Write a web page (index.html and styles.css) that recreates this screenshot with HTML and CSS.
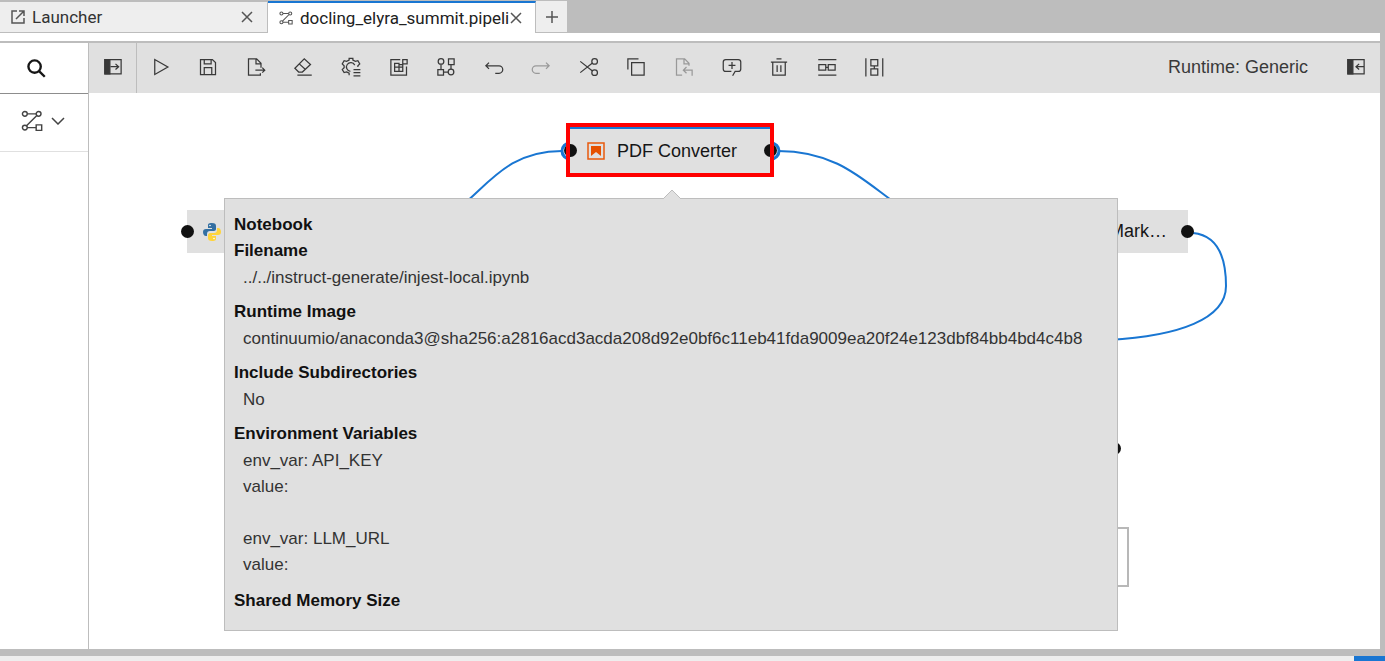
FILE: index.html
```html
<!DOCTYPE html>
<html lang="en">
<head>
<meta charset="utf-8">
<title>docling_elyra_summit.pipeline</title>
<link rel="stylesheet" href="styles.css">
</head>
<body>
<svg class="sprite" aria-hidden="true">
  <symbol id="pipeline" viewBox="0 0 20 20"><circle cx="3.500" cy="3.500" r="2.200"/><circle cx="16" cy="3.500" r="2.200"/><circle cx="3.500" cy="16" r="2.200"/><path d="M5.700 3.500h8.100M14.400 5 5 14.400M5.700 16h8.100M13.800 13.500h5v5h-5z"/></symbol>
  <symbol id="close" viewBox="0 0 12 12"><path d="m1 1 10 10M11 1 1 11"/></symbol>
</svg>
<div class="app">
  <header class="tabs">
    <div class="tab">
      <svg class="tab-icon launch" viewBox="0 0 14 14"><path d="M6 1H1v12h12V8M8 1h5v5M13 1 5 9"/></svg>
      <span class="tab-name">Launcher</span>
      <button class="tab-close" aria-label="Close Launcher"><svg><use href="#close"/></svg></button>
    </div>
    <div class="tab active">
      <svg class="tab-icon"><use href="#pipeline"/></svg>
      <span class="tab-name">docling_elyra_summit.pipeli</span>
      <button class="tab-close" aria-label="Close pipeline"><svg><use href="#close"/></svg></button>
    </div>
    <button class="tab-add" aria-label="New tab"><svg viewBox="0 0 12 12"><path d="M6 0v12M0 6h12"/></svg></button>
  </header>
  <main class="editor">
    <aside class="palette">
      <button class="search" aria-label="Search nodes"><svg viewBox="0 0 20 20"><circle cx="8" cy="8" r="6.500"/><path d="m12.700 12.700 6 6"/></svg></button>
      <button class="category" aria-label="Pipeline nodes"><svg class="cat-icon"><use href="#pipeline"/></svg><svg class="chevron" viewBox="0 0 14 8"><path d="m1 1 6 6 6-6"/></svg></button>
    </aside>
    <section class="work">
      <div class="toolbar">
        <button class="panel-left" aria-label="Open palette"><svg viewBox="0 0 32 32"><path d="M3 4h26v23H3zM12 15.500h13M20 11l5 4.500-5 4.500"/><path class="fill" d="M3 4h8v23H3z"/></svg></button>
        <div class="tools">
          <button aria-label="Run"><svg viewBox="0 0 32 32"><path d="M6 4v24l21-12z"/></svg></button>
          <button aria-label="Save"><svg viewBox="0 0 32 32"><path d="M4 4h19l5 5v19H4zM10 4v7h11V4M10 28V17h12v11"/></svg></button>
          <button aria-label="Export"><svg viewBox="0 0 32 32"><path d="M23 26v3H4V3h13l7 7v7M16 3v8h8M15 21h15M26 17l4 4-4 4"/></svg></button>
          <button aria-label="Clear"><svg viewBox="0 0 32 32"><path d="M7 29h23M9 24 3 18 18 3l10 9-13 12zM10 11l10 9"/></svg></button>
          <button aria-label="Properties"><svg viewBox="0 0 32 32"><path d="M13 29v-3l-4-2-4 1-3-5 3-3v-3L2 11l3-5 4 1 4-2V2h6v3l4 2 4-1 3 5-3 3v2M22 13a7 7 0 1 0-7 10M20 20h11M20 25h11M20 30h11"/></svg></button>
          <button aria-label="Runtimes"><svg viewBox="0 0 32 32"><path d="M18 4H3v25h25V15M22 4h7v7h-7zM9 10h7v13H9zM9 16h13v7H9M16 16v7M16 12h6v4"/></svg></button>
          <button aria-label="Components"><svg viewBox="0 0 32 32"><circle cx="8" cy="7" r="4.500"/><path d="M20 3h9v9h-9zM3 20h9v9H3zM8 12v8M24 12v8M12 24h8"/><circle cx="24" cy="24" r="4.500"/></svg></button>
          <button aria-label="Undo"><svg viewBox="0 0 32 32"><path d="M8 9 3 14l5 5M3 14h21a6 6 0 0 1 0 12h-6"/></svg></button>
          <button disabled aria-label="Redo"><svg viewBox="0 0 32 32"><path d="m24 9 5 5-5 5M29 14H8a6 6 0 0 0 0 12h6"/></svg></button>
          <button aria-label="Cut"><svg viewBox="0 0 32 32"><circle cx="25" cy="7" r="4.500"/><circle cx="25" cy="25" r="4.500"/><path d="m2 7 19 15M2 25 21 10"/></svg></button>
          <button aria-label="Copy"><svg viewBox="0 0 32 32"><path d="M9 9h20v20H9zM3 20V3h17"/></svg></button>
          <button disabled aria-label="Paste"><svg viewBox="0 0 32 32"><path d="M13 29H4V3h13l7 7v4M16 3v8h8M20 16l-5 5 5 5M15 21h14v9"/></svg></button>
          <button aria-label="Add comment"><svg viewBox="0 0 32 32"><path d="m17 30 4-7h5c2 0 4-1 4-4V8c0-2-1-4-4-4H6C3 4 2 6 2 8v11c0 3 2 4 4 4h9M16 8v11M10.500 13.500h11"/></svg></button>
          <button aria-label="Delete"><svg viewBox="0 0 32 32"><path d="M3 8h26M6 8v21h20V8M12 3h8M13 13v11M19 13v11"/></svg></button>
          <button aria-label="Arrange horizontally"><svg viewBox="0 0 32 32"><path d="M2 4h29M2 29h29M3 12h11v9H3zM18 12h11v9H18zM14 16.500h4"/></svg></button>
          <button aria-label="Arrange vertically"><svg viewBox="0 0 32 32"><path d="M3 2v29M30 2v29M11 4h11v10H11zM11 19h11v10H11zM16.500 14v5"/></svg></button>
        </div>
        <span class="runtime">Runtime: Generic</span>
        <button class="panel-right" aria-label="Open properties panel"><svg viewBox="0 0 32 32"><path d="M3 4h26v23H3zM16 15.500h12M21 11l-5 4.500 5 4.500"/><path class="fill" d="M3 4h8v23H3z"/></svg></button>
      </div>
      <div class="canvas">
        <svg class="links"><path d="M302 139C389 139 389 58 473 58M689 58C786 58 796 139 891 139M1104 140C1124 142 1137 158 1137 193C1137 226 1090 243 1020 247"/><circle cx="481" cy="58" r="8"/><circle cx="682" cy="58" r="8"/></svg>
        <div class="node python">
          <svg viewBox="0 0 18 18"><path fill="#3470a2" d="M9 0C5 0 5 1 5 3v2h4v1H3C1 6 0 7 0 9s1 4 3 4h1v-2c0-2 1-3 3-3h4c1 0 2-1 2-2V3c0-2-1-3-4-3"/><path fill="#ffd43b" d="M9 18c4 0 4-1 4-3v-2H9v-1h6c2 0 3-1 3-3s-1-4-3-4h-1v2c0 2-1 3-3 3H7c-1 0-2 1-2 2v3c0 2 1 3 4 3"/><circle cx="7" cy="2.500" r=".8" fill="#fff"/><circle cx="11" cy="15.500" r=".8" fill="#fff"/></svg>
          <i class="port in"></i>
        </div>
        <div class="node markdown"><span>Docling Mark…</span><i class="port out"></i></div>
        <div class="node pdf">
          <i class="port in"></i>
          <svg viewBox="0 0 18 18"><path fill="none" stroke="#e8590c" stroke-width="1.500" d="M1 1h16v16H1z"/><path fill="#e65100" d="M4 4h10v10L9 10l-5 4z"/></svg>
          <span>PDF Converter</span>
          <i class="port out"></i>
        </div>
        <div class="highlight"></div>
        <i class="port lone"></i>
        <div class="comment"></div>
        <div class="tooltip" role="tooltip">
          <strong>Notebook</strong>
          <dl>
            <dt>Filename</dt><dd>../../instruct-generate/injest-local.ipynb</dd>
            <dt>Runtime Image</dt><dd>continuumio/anaconda3@sha256:a2816acd3acda208d92e0bf6c11eb41fda9009ea20f24e123dbf84bb4bd4c4b8</dd>
            <dt>Include Subdirectories</dt><dd>No</dd>
            <dt>Environment Variables</dt><dd>env_var: API_KEY<br>value:<br><br>env_var: LLM_URL<br>value:</dd>
            <dt>Shared Memory Size</dt>
          </dl>
          <svg class="arrow" viewBox="0 0 18 10"><path d="M0 10 9 1l9 9"/></svg>
        </div>
      </div>
    </section>
  </main>
  <footer class="status"><span></span></footer>
</div>
</body>
</html>
```
FILE: styles.css
```css
* { box-sizing: border-box; }
body { margin: 0; font-family: "Liberation Sans", Arial, sans-serif; font-size: 18px; color: #161616; }
button { margin: 0; padding: 0; border: 0; background: none; display: flex; align-items: center; justify-content: center; color: inherit; }
svg { display: block; fill: none; stroke: currentColor; }
.sprite { position: absolute; width: 0; height: 0; }
.app { height: 100vh; display: flex; flex-direction: column; background: #bdbdbd; overflow: hidden; }

.tabs { display: flex; height: 33px; padding-top: 1px; font-family: Roboto, sans-serif; font-size: 17px; color: #333; }
.tab { display: flex; align-items: center; width: 268px; padding: 0 14px 0 11px; gap: 7px; background: #eee; border: 1px solid #bdbdbd; border-left: 0; }
.tab.active { background: #fff; border-top: 2px solid #1976d2; border-bottom: 0; color: #212121; }
.tab-icon { width: 14px; height: 14px; flex: none; color: #555; stroke-width: 1.5; }
.tab-name { flex: 1; white-space: nowrap; }
.active .tab-name { margin-right: -6px; }
.tab-close svg { width: 12px; height: 12px; color: #555; stroke-width: 1.5; }
.tab-add { width: 31px; background: #eee; border-bottom: 1px solid #bdbdbd; color: #555; }
.tab-add svg { width: 12px; height: 12px; stroke-width: 1.5; }

.editor { flex: 1; min-height: 0; display: flex; margin-right: 5px; padding-top: 8px; background: #fff; }
.palette { width: 89px; flex: none; border-top: 2px solid #bdbdbd; border-right: 1px solid #bdbdbd; }
.palette button { width: 100%; }
.search { height: 51px; padding-right: 16px; border-bottom: 1px solid #8d8d8d; }
.search svg { width: 19px; height: 19px; stroke-width: 2.5; }
.category { height: 58px; padding: 0 2px 4px 0; gap: 8px; border-bottom: 1px solid #e0e0e0; color: #444; }
.cat-icon { width: 22px; height: 22px; stroke-width: 1.3; }
.chevron { width: 14px; height: 8px; stroke-width: 1.5; }

.work { flex: 1; min-width: 0; display: flex; flex-direction: column; }
.toolbar { display: flex; height: 52px; flex: none; align-items: stretch; padding-bottom: 2px; background: #e0e0e0; border-top: 2px solid #bdbdbd; color: #393939; }
.toolbar svg { width: 20px; height: 20px; stroke-width: 2; }
.toolbar .fill { fill: currentColor; }
.toolbar button:disabled { color: #999; }
.panel-left { width: 48px; margin-bottom: -2px; padding-bottom: 2px; border-right: 1px solid #bdbdbd; }
.tools { width: 761px; display: grid; grid-template-columns: repeat(16, 1fr); }
.runtime { margin-left: auto; align-self: center; }
.panel-right { width: 48px; margin-left: 24px; }

.canvas { position: relative; flex: 1; overflow: hidden; }
.links { position: absolute; inset: 0; width: 100%; height: 100%; stroke: #1976d2; stroke-width: 2; }
.links circle { fill: #fff; stroke-width: 3; }
.node { position: absolute; height: 43px; display: flex; align-items: center; background: #e0e0e0; }
.node svg { width: 18px; height: 18px; stroke: none; }
.python { left: 98px; top: 117px; width: 200px; padding-left: 16px; }
.markdown { left: 899px; top: 117px; width: 200px; padding-right: 21px; justify-content: flex-end; }
.pdf { left: 481px; top: 34px; width: 201px; height: 46px; padding-left: 17px; gap: 12px; border-top: 2px solid #1976d2; }
.port { position: absolute; width: 13px; height: 13px; border-radius: 50%; background: #111; }
.port.in { left: -6px; top: 15px; }
.port.out { right: -6px; top: 15px; }
.highlight { position: absolute; left: 477px; top: 30px; width: 208px; height: 54px; border: 4px solid #f00; }
.lone { left: 1019px; top: 349px; }
.comment { position: absolute; left: 900px; top: 434px; width: 140px; height: 60px; border: 2px solid #b8b8b8; }
.tooltip { position: absolute; left: 135px; top: 105px; min-width: 894px; padding: 13px 9px 16px; font-size: 17px; line-height: 26px; background: #e0e0e0; border: 1px solid #bdbdbd; color: #333; }
.tooltip strong, .tooltip dt { display: block; font-weight: 700; color: #111; }
.tooltip dl { margin: 0; }
.tooltip dd { margin: 1px 0 8px; padding: 0 0 0 9px; }
.tooltip dd:last-of-type { margin-bottom: 10px; }
.arrow { position: absolute; left: 438px; top: -10px; width: 18px; height: 10px; fill: #e0e0e0; stroke: #bdbdbd; }

.status { height: 12px; flex: none; display: flex; justify-content: flex-end; border-top: 7px solid #bdbdbd; background: #eee; }
.status span { width: 31px; background: #1976d2; }
```
